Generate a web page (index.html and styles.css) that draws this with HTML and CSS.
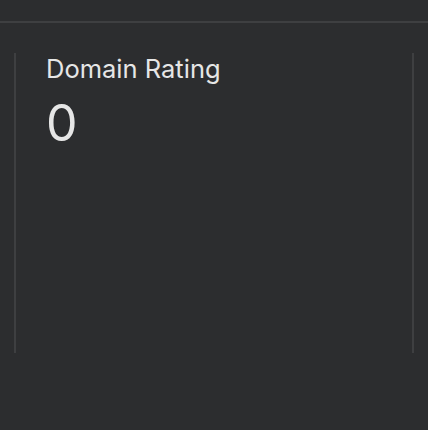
FILE: index.html
```html
<!DOCTYPE html>
<html lang="en">
<head>
<meta charset="utf-8">
<link rel="stylesheet" href="styles.css">
</head>
<body>
<div class="topbar"></div>
<div class="cards">
  <section class="card">
    <h2 class="card-title">Domain Rating</h2>
    <div class="card-value">0</div>
  </section>
</div>
</body>
</html>
```
FILE: styles.css
```css
html, body {
  margin: 0;
  padding: 0;
  background: #2c2d2f;
  height: 100%;
}
body {
  font-family: Inter, "Noto Sans", sans-serif;
  color: #e6e6e6;
}
.topbar {
  height: 21px;
  border-bottom: 2px solid #3e3f41;
}
.cards {
  padding: 30px 14px 0 14px;
}
.card {
  box-sizing: border-box;
  width: 400px;
  height: 300px;
  border-left: 2px solid #3e3f41;
  border-right: 2px solid #3e3f41;
  padding: 0 30px;
}
.card-title {
  margin: 0;
  font-size: 25.5px;
  font-weight: 400;
  line-height: 32px;
}
.card-value {
  margin-top: 14px;
  font-size: 50px;
  font-weight: 400;
  line-height: 48px;
}
```
